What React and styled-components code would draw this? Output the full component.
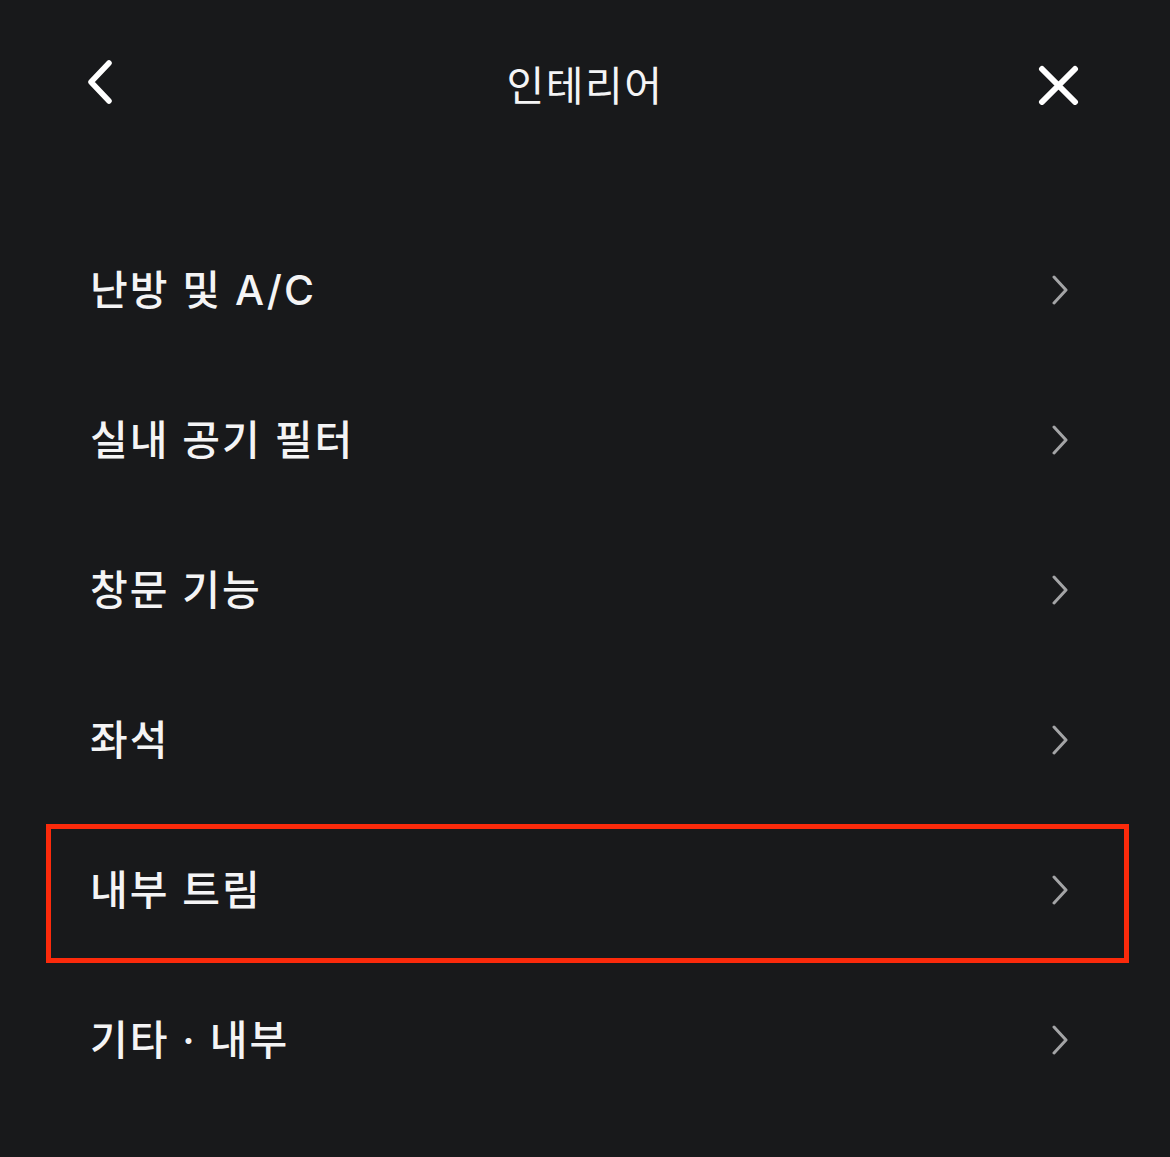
import React from "react";
import styled, { createGlobalStyle } from "styled-components";

const GlobalStyle = createGlobalStyle`
  html, body {
    margin: 0;
    padding: 0;
    background: #18191b;
  }
  body {
    font-family: "Inter", "Noto Sans CJK KR", sans-serif;
  }
`;

const StyledPage = styled.div`
  width: 1170px;
  min-height: 1157px;
  background: #18191b;
  color: #f4f4f5;
`;

const StyledHeader = styled.header`
  display: grid;
  grid-template-columns: 1fr auto 1fr;
  align-items: center;
  height: 166px;
  padding: 0 88px 0 74px;
  box-sizing: border-box;
`;

const StyledIconButton = styled.button`
  display: flex;
  align-items: center;
  justify-content: center;
  justify-self: ${(props) => (props.$end ? "end" : "start")};
  width: 48px;
  height: 48px;
  padding: 0;
  border: none;
  background: none;
  color: #ffffff;
  cursor: pointer;
`;

const StyledTitle = styled.h1`
  margin: 0 0 0 14px;
  font-size: 41px;
  font-weight: 400;
  letter-spacing: 1.5px;
  color: #f4f4f5;
`;

const StyledList = styled.ul`
  list-style: none;
  margin: 49px 0 0;
  padding: 0;
`;

const StyledRow = styled.li`
  position: relative;
  display: flex;
  align-items: center;
  justify-content: space-between;
  height: 150px;
  padding: 0 101px 0 90px;
  box-sizing: border-box;

  &::after {
    content: "";
    display: ${(props) => (props.$highlighted ? "block" : "none")};
    position: absolute;
    top: 9px;
    bottom: 2px;
    left: 46px;
    right: 41px;
    border: 5px solid #fc2a0b;
    pointer-events: none;
  }
`;

const StyledLabel = styled.span`
  margin-bottom: 6px;
  font-size: 41px;
  font-weight: 500;
  letter-spacing: 2px;
  color: #f4f4f5;
`;

const BackIcon = () => (
  <svg width="34" height="46" viewBox="0 0 34 46" fill="none">
    <path
      d="M28 3 L10 22 L28 41"
      stroke="currentColor"
      strokeWidth="5.5"
      strokeLinecap="round"
      strokeLinejoin="round"
    />
  </svg>
);

const CloseIcon = () => (
  <svg width="44" height="44" viewBox="0 0 44 44" fill="none">
    <path
      d="M6 8 L39 41 M39 8 L6 41"
      stroke="currentColor"
      strokeWidth="6"
      strokeLinecap="round"
    />
  </svg>
);

const ChevronIcon = () => (
  <svg width="18" height="30" viewBox="0 0 18 30" fill="none">
    <path
      d="M3 2 L15 15 L3 28"
      stroke="#a3a4a6"
      strokeWidth="3"
      strokeLinecap="round"
      strokeLinejoin="round"
    />
  </svg>
);

const items = [
  { label: "난방 및 A/C" },
  { label: "실내 공기 필터" },
  { label: "창문 기능" },
  { label: "좌석" },
  { label: "내부 트림", highlighted: true },
  { label: "기타 · 내부" },
];

const App = () => {
  return (
    <StyledPage>
      <GlobalStyle />
      <StyledHeader>
        <StyledIconButton aria-label="뒤로">
          <BackIcon />
        </StyledIconButton>
        <StyledTitle>인테리어</StyledTitle>
        <StyledIconButton aria-label="닫기" $end>
          <CloseIcon />
        </StyledIconButton>
      </StyledHeader>

      <StyledList>
        {items.map((item) => (
          <StyledRow key={item.label} $highlighted={item.highlighted}>
            <StyledLabel>{item.label}</StyledLabel>
            <ChevronIcon />
          </StyledRow>
        ))}
      </StyledList>
    </StyledPage>
  );
};

export default App;
